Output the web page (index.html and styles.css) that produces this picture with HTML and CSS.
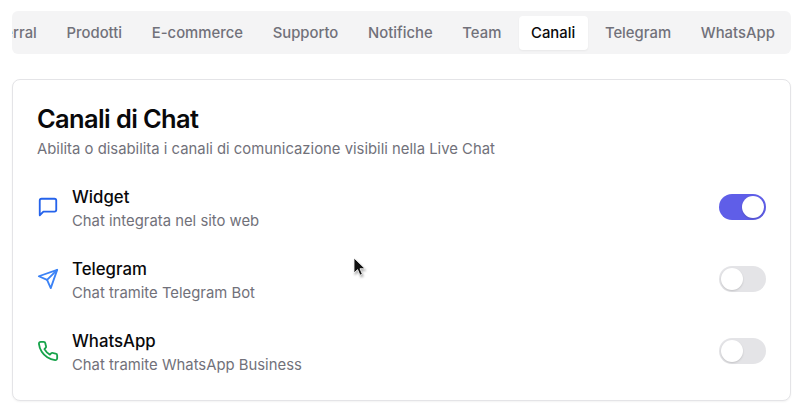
FILE: index.html
```html
<!DOCTYPE html>
<html lang="it">
<head>
<meta charset="utf-8">
<title>Canali di Chat</title>
<link rel="stylesheet" href="styles.css">
</head>
<body>
<main class="page">
  <nav class="tabs">
    <a class="tab">Referral</a>
    <a class="tab">Prodotti</a>
    <a class="tab">E-commerce</a>
    <a class="tab">Supporto</a>
    <a class="tab">Notifiche</a>
    <a class="tab">Team</a>
    <a class="tab tab-active">Canali</a>
    <a class="tab">Telegram</a>
    <a class="tab">WhatsApp</a>
  </nav>
  <section class="card">
    <h1 class="card-title">Canali di Chat</h1>
    <p class="card-sub">Abilita o disabilita i canali di comunicazione visibili nella Live Chat</p>
    <div class="rows">
      <div class="row">
        <svg class="icon icon-widget" viewBox="0 0 24 24"><path d="M21 15a2 2 0 0 1-2 2H7l-4 4V5a2 2 0 0 1 2-2h14a2 2 0 0 1 2 2z"/></svg>
        <div class="row-text">
          <div class="row-title">Widget</div>
          <div class="row-sub">Chat integrata nel sito web</div>
        </div>
        <div class="switch switch-on"><span class="knob"></span></div>
      </div>
      <div class="row">
        <svg class="icon icon-telegram" viewBox="0 0 24 24"><path d="m22 2-7 20-4-9-9-4Z"/><path d="M22 2 11 13"/></svg>
        <div class="row-text">
          <div class="row-title">Telegram</div>
          <div class="row-sub">Chat tramite Telegram Bot</div>
        </div>
        <div class="switch"><span class="knob"></span></div>
      </div>
      <div class="row">
        <svg class="icon icon-whatsapp" viewBox="0 0 24 24"><path d="M22 16.92v3a2 2 0 0 1-2.18 2 19.79 19.79 0 0 1-8.63-3.07 19.5 19.5 0 0 1-6-6 19.79 19.79 0 0 1-3.07-8.67A2 2 0 0 1 4.11 2h3a2 2 0 0 1 2 1.72 12.84 12.84 0 0 0 .7 2.81 2 2 0 0 1-.45 2.11L8.09 9.91a16 16 0 0 0 6 6l1.27-1.27a2 2 0 0 1 2.11-.45 12.84 12.84 0 0 0 2.81.7A2 2 0 0 1 22 16.92z"/></svg>
        <div class="row-text">
          <div class="row-title">WhatsApp</div>
          <div class="row-sub">Chat tramite WhatsApp Business</div>
        </div>
        <div class="switch"><span class="knob"></span></div>
      </div>
    </div>
  </section>
</main>
<svg class="cursor" viewBox="0 0 12 20" width="12" height="20"><path d="M1 1v15l3.6-3.4 2.4 5.6 2.4-1-2.4-5.5H12Z"/></svg>
</body>
</html>
```

FILE: styles.css
```css
* { box-sizing: border-box; }
html, body { margin: 0; height: 100%; background: #fff; overflow: hidden; }
body { font-family: Inter, "Liberation Sans", sans-serif; color: #09090b; position: relative; }
.page { padding: 11px 9px 0 12px; display: flex; flex-direction: column; gap: 25px; }
.tabs {
  display: flex; justify-content: flex-end; gap: 4.7px; height: 43px; padding: 4px 3.7px 4px 0;
  background: #f4f4f5; border-radius: 6px; overflow: hidden; align-items: center;
}
.tab { flex: none; padding: 0 12.5px; height: 34px; line-height: 34px; font-size: 14.85px; font-weight: 500; color: #71717a; border-radius: 4px; }
.tab-active { background: #fff; color: #09090b; box-shadow: 0 1px 2px rgba(0,0,0,.05); }
.card { height: 322px; margin-left: -0.5px; padding: 24px 24.5px 0; background: #fff; border: 1px solid #e4e4e7; border-radius: 8px; box-shadow: 0 1px 2px rgba(0,0,0,.05); }
.card-title { margin: 0; font-size: 25.4px; line-height: 30px; font-weight: 600; letter-spacing: -0.6px; color: #09090b; }
.card-sub { margin: 5px 0 0; font-size: 14.85px; line-height: 20px; color: #71717a; }
.rows { margin-top: 25px; display: flex; flex-direction: column; gap: 24px; }
.row { display: flex; align-items: center; gap: 13px; height: 48px; }
.icon { flex: none; width: 22px; height: 22px; margin-bottom: 2px; stroke-width: 2; fill: none; stroke-linecap: round; stroke-linejoin: round; }
.icon-widget { stroke: #2563eb; }
.icon-telegram { stroke: #3b82f6; }
.icon-whatsapp { stroke: #16a34a; }
.row-text { flex: 1; }
.row-title { font-size: 16.8px; line-height: 24px; font-weight: 500; }
.row-sub { font-size: 14.85px; line-height: 20px; color: #71717a; margin-top: 2px; }
.switch { flex: none; width: 47px; height: 26px; margin-bottom: 2px; padding: 2px; border-radius: 13px; background: #e4e4e7; display: flex; justify-content: flex-start; }
.switch-on { background: #5f5ee8; justify-content: flex-end; }
.knob { width: 22px; height: 22px; border-radius: 50%; background: #fff; box-shadow: 0 1px 2px rgba(0,0,0,.15); }
.cursor { position: absolute; left: 353px; top: 257px; fill: #111; stroke: #fff; stroke-width: .8; filter: drop-shadow(1px 2px 1px rgba(0,0,0,.3)); }
```
